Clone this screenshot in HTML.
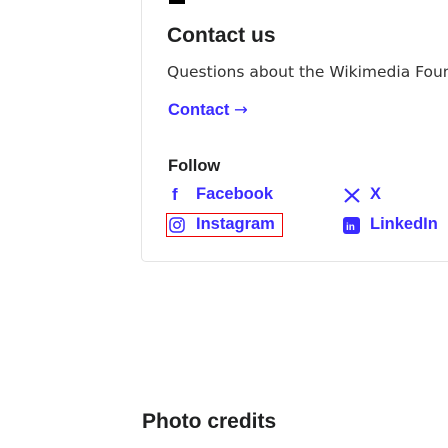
<!DOCTYPE html>
<html><head><style>
html,body{margin:0;width:448px;height:448px;overflow:hidden;background:#fff}
body{font-family:"DejaVu Sans","Liberation Sans",sans-serif;color:#202122;position:relative}
.wrap{position:absolute;left:0;top:0;width:448px;height:448px;overflow:hidden}
.card{position:absolute;left:141px;top:-10px;width:400px;height:270px;border:1px solid #e4e4e4;border-radius:5px}
.a{position:absolute;white-space:nowrap}
.b{font-weight:bold;font-family:"Liberation Sans",sans-serif}
.l{color:#3a2bff;font-weight:bold;font-size:16.5px;font-family:"Liberation Sans",sans-serif}
</style></head><body><div class="wrap">
<div class="card"></div>
<div class="a" style="left:169px;top:0;width:16px;height:4px;background:#000"></div>
<div class="a b" style="left:167px;top:24px;font-size:21px">Contact us</div>
<div class="a" style="left:167px;top:63px;font-size:15.5px;color:#333">Questions about the Wikimedia Foundation?</div>
<div class="a l" style="left:168px;top:100px">Contact <span style="font-family:'DejaVu Sans';font-weight:normal">→</span></div>
<div class="a b" style="left:168px;top:157px;font-size:16.5px">Follow</div>
<div class="a l" style="left:172px;top:185px;font-size:17px">f</div>
<div class="a l" style="left:196px;top:185px">Facebook</div>
<div class="a" style="left:166px;top:213px;width:115px;height:22px;border:1px solid #e00"></div>
<svg class="a" style="left:169px;top:217px" width="16" height="16" viewBox="0 0 16 16"><rect x="1" y="1" width="14" height="14" rx="4" fill="none" stroke="#3a2bff" stroke-width="1.5"/><circle cx="8" cy="8" r="3.2" fill="none" stroke="#3a2bff" stroke-width="1.5"/><circle cx="12" cy="4" r="1" fill="#3a2bff"/></svg>
<div class="a l" style="left:196px;top:215px">Instagram</div>
<svg class="a" style="left:344px;top:188px" width="16" height="15" viewBox="0 0 16 15"><path d="M1 1L15 14M15 1L1 14" stroke="#3a2bff" stroke-width="2.2"/></svg>
<div class="a l" style="left:370px;top:185px">X</div>
<svg class="a" style="left:343px;top:217px" width="17" height="17" viewBox="0 0 17 17"><rect width="17" height="17" rx="3" fill="#3a2bff"/><text x="3" y="13" font-size="10" font-weight="bold" fill="#fff" font-family="Liberation Sans">in</text></svg>
<div class="a l" style="left:370px;top:215px">LinkedIn</div>
<div class="a b" style="left:142px;top:410px;font-size:21px">Photo credits</div>
</div></body></html>
